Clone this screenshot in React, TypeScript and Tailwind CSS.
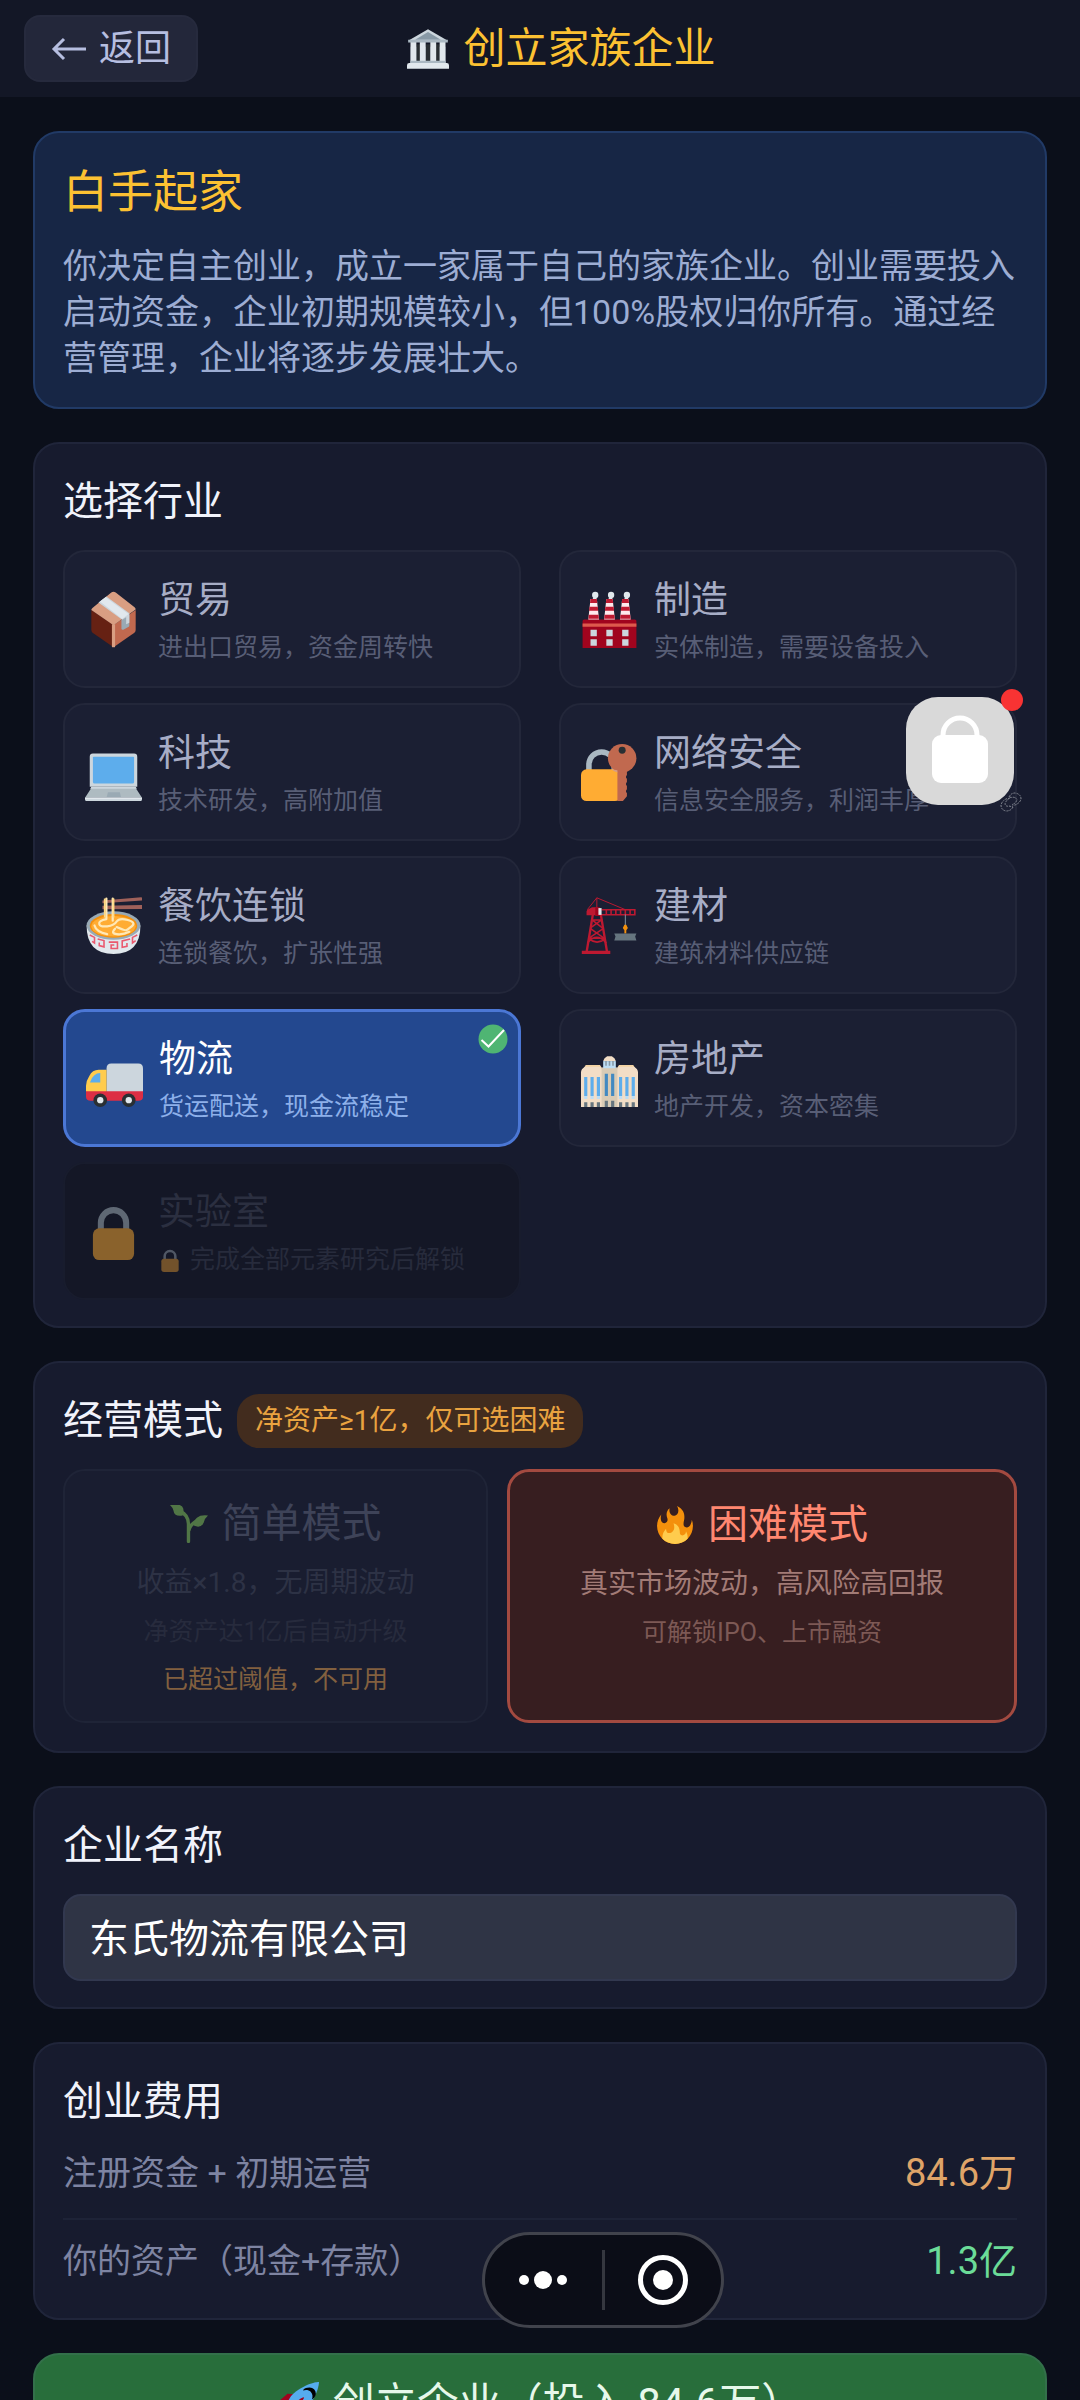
import { useState } from 'react'
import type { ReactNode } from 'react'
import clsx from 'clsx'

type IconProps = { className?: string }

const Emoji = ({ className, children }: IconProps & { children: ReactNode }) => (
    <svg viewBox="0 0 36 36" className={clsx('shrink-0', className)} aria-hidden="true">
        {children}
    </svg>
)

const BankIcon = ({ className }: IconProps) => (
    <Emoji className={className}>
        <path fill="#66757F" d="M3 16h30v18H3z" />
        <path fill="#292F33" d="M8 14h4v18H8zm8 0h4v18h-4zm8 0h4v18h-4z" />
        <path fill="#E1E8ED" d="M3 11h5v21H3zm8 0h5v21h-5zm9 0h5v21h-5zm8 0h5v21h-5z" />
        <path fill="#CCD6DD" d="M1 11L18 1l17 10z" />
        <path fill="#8899A6" d="M7 10l11-6.5L29 10z" />
        <path fill="#AAB8C2" d="M1 10h34v2.500H1zM3 28h30v2.500H3z" />
        <path fill="#E1E8ED" d="M2 30h32a2 2 0 0 1 2 2v3H0v-3a2 2 0 0 1 2-2z" />
    </Emoji>
)

const PackageIcon = ({ className }: IconProps) => (
    <Emoji className={className}>
        <path fill="#662113" d="M18 35.500L4.800 26.300Q4 25.700 4 24.700V12l14 9.500z" />
        <path fill="#C1694F" d="M18 35.500l13.200-9.200q.8-.6.8-1.600V12l-14 9.500z" />
        <path fill="#D99E82" d="M4 12q0-.8.700-1.300L16.600.9q1.400-1 2.800 0l11.900 9.300q.7.600.7 1.500L18 21.700z" />
        <path fill="#D99E82" d="M17 21h2v14.500h-2z" />
        <path fill="#99AAB5" d="M23 18.300l5-3.500v7q0 .5-.4.800l-3.400 1.800q-1.200.5-1.200-.8z" />
        <path fill="#CCD6DD" d="M8.500 7.300l5-3.800L28 14v6l-2 1v-4.500l-2.500 1.700z" />
        <path fill="#E1E8ED" d="M9.500 6.600l3.500-2.700L27.500 14.500l-4 3.200z" />
    </Emoji>
)

const FactoryIcon = ({ className }: IconProps) => (
    <Emoji className={className}>
        <g fill="#E1E8ED">
            <circle cx="9" cy="2.500" r="2" />
            <circle cx="19" cy="2.500" r="2" />
            <circle cx="29" cy="2.500" r="2" />
            <path d="M7 6l1.500-4 1.500 3zm10 0l1.500-4 1.500 3zm10 0l1.500-4 1.500 3z" />
        </g>
        <path fill="#FFE8EC" d="M6 5h4l1.500 14h-7zM16 5h4l1.500 14h-7zM26 5h4l1.500 14h-7z" />
        <path
            fill="#BE1931"
            d="M6 5h4l.3 2.500H5.700zM5.400 10h5.200l.3 2.500H5.100zM4.900 15h6.200l.2 2.500H4.700zM16 5h4l.3 2.500h-4.600zM15.400 10h5.200l.3 2.500h-5.800zM14.900 15h6.200l.2 2.500h-6.600zM26 5h4l.3 2.500h-4.600zM25.400 10h5.200l.3 2.500h-5.800zM24.900 15h6.200l.2 2.500h-6.600z"
        />
        <path fill="#A0041E" d="M2 18h32q1 0 1 1v17H1V19q0-1 1-1z" />
        <path fill="#DD5A4D" d="M1 20.500h34v2H1z" />
        <path fill="#CCD6DD" d="M6 24.500h4v4H6zm10 0h4v4h-4zm10 0h4v4h-4zM6 30.500h4v4H6zm10 0h4v4h-4zm10 0h4v4h-4z" />
    </Emoji>
)

const LaptopIcon = ({ className }: IconProps) => (
    <Emoji className={className}>
        <g transform="translate(0 2)">
            <path fill="#CCD6DD" d="M5 4h26q2 0 2 2v19H3V6q0-2 2-2z" />
            <path fill="#5DADEC" d="M5.500 6h25q.5 0 .5.500V22q0 1-1 1H6q-1 0-1-1V6.500q0-.5.500-.5z" />
            <path fill="#AEBBC1" d="M4.500 25h27l4.500 7H0z" />
            <path fill="#CCD6DD" d="M4 25h28l.8 1.300H3.200zM0 32.500h36V33q0 1-1 1H1q-1 0-1-1z" />
            <path fill="#E1E8ED" d="M0 31.800h36v1H0z" />
            <path fill="#9AAAB4" d="M14.500 28.500h7.500l.7 3h-9z" />
        </g>
    </Emoji>
)

const LockKeyIcon = ({ className }: IconProps) => (
    <Emoji className={className}>
        <path fill="none" stroke="#AAB8C2" strokeWidth="3.500" d="M5 19v-6a8 8 0 0 1 16 0v6" />
        <rect x="0" y="16" width="25" height="20" rx="3.500" fill="#FFAC33" />
        <path fill="#C1694F" d="M23 16h6v3.500q-1.200 1.200 0 2.500v2q-1.200 1.200 0 2.500v2q-1.200 1.200 0 2.500V33l-2.500 3H23z" />
        <circle cx="26" cy="9" r="9" fill="#C1694F" />
        <circle cx="26" cy="4" r="2.200" fill="#292F33" />
        <path fill="#D99E82" d="M19 16q2 1.500 4 2v-1.500z" />
    </Emoji>
)

const NoodlesIcon = ({ className }: IconProps) => (
    <Emoji className={className}>
        <path fill="#A0615A" d="M11 2.200L35.500.2q.5 0 .5.500v1.500L11 4zM11 5.500l25-.4v2.400l-25 .200z" />
        <path fill="#E1E8ED" d="M1 18q0 18 17 18t17-18z" />
        <path
            fill="none"
            stroke="#EA596E"
            strokeWidth="1"
            d="M3 24l3 1.500v3.500l-1.500-1M8 26.500l4 1v4l-3-.8v-2M15 28.500h5.500v4H16.500v-2.200h2M28.500 26.500l-5 1.200v4l3-.6v-2M33 24l-3 1.500v3.500l2-1.500"
        />
        <ellipse cx="18" cy="18" rx="17" ry="9" fill="#99AAB5" />
        <ellipse cx="18" cy="18.200" rx="15" ry="7.500" fill="#F4900C" />
        <ellipse cx="18" cy="18.500" rx="14" ry="6.500" fill="#FFAC33" />
        <path
            fill="none"
            stroke="#FFE8B6"
            strokeWidth="1.400"
            strokeLinecap="round"
            d="M13.500 1v13M17.500 1v14M13.500 14q-5 1-4.500 3t5 1.500 6-3 7-1 2.500 4-4 2.500-5.500-2M6 18q1 4 8 5.500M19 20q-3 3 1 3.500t8-1.500"
        />
        <path stroke="#FFD983" strokeWidth="1.200" d="M12.500 1v12M18 1v12" />
    </Emoji>
)

const CraneIcon = ({ className }: IconProps) => (
    <Emoji className={className}>
        <g fill="none" stroke="#BE1931">
            <path strokeWidth=".6" d="M4 8l6-7.500L28 8M10 .5V8" />
            <path strokeWidth="1" d="M13 8h21v3.200H13M16 8v3M19 8v3M22 8v3M25 8v3M28 8v3M31 8v3" />
            <path strokeWidth="1.500" d="M7.500 11L3.500 35M12.500 11l4 24" />
            <path strokeWidth="1" d="M7 14.500l6.500 5M13 14.500l-7 5M6 20l8.500 6M14 20l-9 6M5 26.500q5 4 10.500 0M4 29q6-7 12 0M6.500 14.500h7M5 26h10" />
        </g>
        <path fill="#BE1931" d="M4 8l3-1.500h4v5H3.500V9zM.5 34h18v2H.5z" />
        <path fill="#A0041E" d="M9 6.500h3V12H9z" />
        <path fill="#E1E8ED" d="M11 7h2v4.300h-2z" />
        <path stroke="#8899A6" strokeWidth=".6" d="M28 11v7.500" />
        <path fill="#F4900C" d="M27.400 17.500h1.200l1 2-1 1.500v2h-1.200v-2l-1-1.500z" />
        <path fill="#66757F" d="M21 23h14l-.8 2 .8 2.500H21l.8-2.500z" />
    </Emoji>
)

const TruckIcon = ({ className }: IconProps) => (
    <Emoji className={className}>
        <g transform="translate(0 2.500)">
            <path fill="#CCD6DD" d="M16 6h17q3 0 3 3v17H13V9q0-3 3-3z" />
            <path fill="#FFCC4D" d="M8 10h5v15H0v-5q0-3 2-6 2-4 6-4z" />
            <path fill="#5DADEC" d="M9 12v6H2.500q.8-3 2.800-4.600Q6.800 12 9 12z" />
            <path fill="#DD2E44" d="M0 23.500h36V27q0 2.500-3 2.500H3Q0 29.500 0 27z" />
            <g fill="#292F33">
                <circle cx="9" cy="29.200" r="4.300" />
                <circle cx="27" cy="29.200" r="4.300" />
            </g>
            <g fill="#E1E8ED">
                <circle cx="9" cy="29.200" r="2" />
                <circle cx="27" cy="29.200" r="2" />
            </g>
        </g>
    </Emoji>
)

const TowersIcon = ({ className }: IconProps) => (
    <Emoji className={className}>
        <g transform="translate(0 1)">
            <path fill="#F3D2A2" d="M3 8.500h9l1 1.500v3H2v-3zM24 8.500h9l1 1.500v3H23v-3z" />
            <path fill="#F2DDC6" d="M2.500 9.500h10L14 12v23H0V13q0-2 2.500-3.500zM23.500 9.500h10Q36 11 36 13v22H22V12z" />
            <path fill="#5DADEC" d="M2 16h2v12H2zm4 0h2v12H6zm4 0h2v12h-2zm14 0h2v12h-2zm4 0h2v12h-2zm4 0h2v12h-2z" />
            <path fill="#BDDDF4" d="M2 28h2v2H2zm4 0h2v2H6zm4 0h2v2h-2zm14 0h2v2h-2zm4 0h2v2h-2zm4 0h2v2h-2z" />
            <path fill="#66757F" d="M2 32h2v3H2zm4 0h2v3H6zm4 0h2v3h-2zm14 0h2v3h-2zm4 0h2v3h-2zm4 0h2v3h-2z" />
            <path fill="#D9CBB5" d="M13 10h10v25H13z" />
            <path fill="#BDDDF4" d="M14 6h8v4.500h-8z" />
            <path fill="#8899A6" d="M15.300 6h1v3h-1zm2.200 0h1v3h-1zm2.200 0h1v3h-1z" />
            <path fill="#F2DDC6" d="M14 6q.5-2 2.500-3h3q2 1 2.500 3z" />
            <path fill="#4289C1" d="M15 14h2v14h-2zm4 0h2v14h-2z" />
            <path fill="#66757F" d="M15 31h2v4h-2zm4 0h2v4h-2z" />
        </g>
    </Emoji>
)

const LockIcon = ({ className }: IconProps) => (
    <Emoji className={className}>
        <path fill="none" stroke="#AAB8C2" strokeWidth="3.800" d="M10 17v-4.500a8 8 0 0 1 16 0V17" />
        <rect x="5" y="16" width="26" height="20" rx="4" fill="#FFAC33" />
    </Emoji>
)

const SproutIcon = ({ className }: IconProps) => (
    <Emoji className={className}>
        <path fill="none" stroke="#77B255" strokeWidth="3.200" strokeLinecap="round" d="M17.500 34.500V18q0-9-9-12.500M18 24q1-6 8-9" />
        <path fill="#77B255" d="M0 0q9-1.500 11.500 1.500T12 10Q4 11.500 3.200 5 3 3 0 0zM36 10q-7-.8-10.500 2t-3 7.500q7 3 9.500-3 1-4 4-6.500z" />
    </Emoji>
)

const FireIcon = ({ className }: IconProps) => (
    <Emoji className={className}>
        <path
            fill="#F4900C"
            d="M35 19c0-2.062-.367-4.039-1.040-5.868-.46 5.389-3.333 8.157-6.335 6.868-2.812-1.208-.917-5.917-.777-8.164.236-3.809-.012-8.169-6.931-11.794 2.875 5.500.333 8.917-2.333 9.125-2.958.231-5.667-2.542-4.667-7.042-3.238 2.386-3.332 6.402-2.333 9 1.042 2.708-.042 4.958-2.583 5.208-2.840.280-4.418-3.041-2.963-8.333C2.520 10.965 1 14.805 1 19c0 9.389 7.611 17 17 17s17-7.611 17-17z"
        />
        <path
            fill="#FFCC4D"
            d="M28.394 23.999c.148 3.084-2.561 4.293-4.019 3.709-2.106-.843-1.541-2.291-2.083-5.291s-2.625-5.083-5.708-6c2.250 6.333-1.247 8.667-3.080 9.084-1.872.426-3.753-.001-3.968-4.007C7.352 23.668 6 26.676 6 30c0 .368.023.730.055 1.090C9.125 34.124 13.342 36 18 36s8.875-1.876 11.945-4.910c.032-.360.055-.722.055-1.090 0-2.187-.584-4.236-1.606-6.001z"
        />
    </Emoji>
)

const RocketIcon = ({ className }: IconProps) => (
    <Emoji className={className}>
        <path fill="#A0041E" d="M1 17l8-7 12 1 4 14 1 2-7 8-1-8L9 18z" />
        <path fill="#FFAC33" d="M.973 35s-.036-7.979 2.985-11S15 21.187 15 21.187 14.999 29 11.999 32c-3 3-11.026 3-11.026 3z" />
        <path fill="#55ACEE" d="M35.999 0s-10 0-22 10c-6 5-6 14-4 16s11 2 16-4c10-12 10-22 10-22z" />
        <path fill="#000" d="M26 5c-1.600 0-3 .9-3.700 2.300 2.300-1 5-.6 6.600 1 1.600 1.700 2 4.300 1 6.600A4 4 0 0 0 26 5z" />
        <path fill="#A0041E" d="M8 28s0-4 1-5 13-10.800 14-9.800-8.800 13-9.800 14S8 28 8 28z" />
    </Emoji>
)

type Industry = {
    id: string
    name: string
    desc: string
    Icon: (props: IconProps) => ReactNode
}

const industries: Industry[] = [
    { id: 'trade', name: '贸易', desc: '进出口贸易，资金周转快', Icon: PackageIcon },
    { id: 'factory', name: '制造', desc: '实体制造，需要设备投入', Icon: FactoryIcon },
    { id: 'tech', name: '科技', desc: '技术研发，高附加值', Icon: LaptopIcon },
    { id: 'security', name: '网络安全', desc: '信息安全服务，利润丰厚', Icon: LockKeyIcon },
    { id: 'food', name: '餐饮连锁', desc: '连锁餐饮，扩张性强', Icon: NoodlesIcon },
    { id: 'material', name: '建材', desc: '建筑材料供应链', Icon: CraneIcon },
    { id: 'logistics', name: '物流', desc: '货运配送，现金流稳定', Icon: TruckIcon },
    { id: 'estate', name: '房地产', desc: '地产开发，资本密集', Icon: TowersIcon },
]

const Panel = ({ className, children }: { className: string; children: ReactNode }) => (
    <section className={clsx('shrink-0 rounded-[26px] border-2 border-[#20253a] bg-[#171b2e] px-7 pt-7', className)}>
        {children}
    </section>
)

const titleClass = 'text-[40px] leading-[60px] text-[#f1f3fb]'

const IndustryCard = ({ item, selected, onSelect }: { item: Industry; selected: boolean; onSelect: () => void }) => (
    <button
        type="button"
        aria-pressed={selected}
        onClick={onSelect}
        className={clsx(
            'relative flex h-[138px] w-[48%] items-center gap-4 rounded-[22px] px-5 text-left',
            selected ? 'border-3 border-[#4b77d5] bg-[#23488f]' : 'border-2 border-[#23273a] bg-[#1b1f33]'
        )}
    >
        <item.Icon className="size-[57px]" />
        <span className="flex flex-col gap-[2px] pt-[6px]">
            <span className={clsx('text-[37px] leading-[50px]', selected ? 'text-white' : 'text-[#a7adc6]')}>{item.name}</span>
            <span className={clsx('text-[25px] leading-[40px]', selected ? 'text-[#8db0ea]' : 'text-[#585e76]')}>{item.desc}</span>
        </span>
        {selected && (
            <svg viewBox="0 0 30 30" className="absolute right-[10px] top-3 size-[30px]" aria-hidden="true">
                <circle cx="15" cy="15" r="14.500" fill="#4fb573" />
                <path d="M3.500 16l7 6.500L26 6" fill="none" stroke="#fff" strokeWidth="2" />
            </svg>
        )}
    </button>
)

const App = () => {
    const [industry, setIndustry] = useState('logistics')
    const [name, setName] = useState('东氏物流有限公司')

    return (
        <div className="relative flex h-screen flex-col overflow-hidden bg-[#0b0f1a] font-['Roboto','Noto_Sans_CJK_SC',sans-serif] text-white">
            <header className="grid shrink-0 grid-cols-[174px_1fr_131px] items-center bg-[#131726] px-6 py-[15px]">
                <button type="button" className="flex h-[67px] items-center justify-center gap-3 rounded-2xl border-2 border-[#262a3d] bg-[#23273a] text-[36px] text-[#b6bee0]">
                    <svg viewBox="0 0 36 36" className="size-9" fill="none" stroke="currentColor" strokeWidth="3" aria-hidden="true">
                        <path d="M35 18H3M13 8L3 18l10 10" />
                    </svg>
                    返回
                </button>
                <h1 className="flex items-center justify-center gap-[14px] text-[42px] leading-[60px] text-[#fcc132]">
                    <BankIcon className="size-[42px]" />
                    创立家族企业
                </h1>
            </header>

            <main className="flex flex-1 flex-col gap-[33px] overflow-y-auto px-[33px] py-[34px] [scrollbar-width:none]">
                <section className="shrink-0 rounded-[26px] border-2 border-[#213a66] bg-[#172645] px-7 pb-[26px] pt-7">
                    <h2 className="mb-[18px] text-[45px] leading-[64px] text-[#fcc132]">白手起家</h2>
                    <p className="text-[34px] leading-[46px] text-[#9dadd3]">
                        你决定自主创业，成立一家属于自己的家族企业。创业需要投入启动资金，企业初期规模较小，但100%股权归你所有。通过经营管理，企业将逐步发展壮大。
                    </p>
                </section>

                <Panel className="pb-[26px]">
                    <h2 className={clsx(titleClass, 'mb-[18px]')}>选择行业</h2>
                    <div className="flex flex-wrap justify-between gap-y-[15px]">
                        {industries.map((item) => (
                            <IndustryCard key={item.id} item={item} selected={industry === item.id} onSelect={() => setIndustry(item.id)} />
                        ))}
                        <button type="button" disabled className="flex h-[138px] w-[48%] items-center gap-4 rounded-[22px] border-2 border-[#181c2d] bg-[#141726] px-5 text-left">
                            <LockIcon className="size-[57px] opacity-50" />
                            <span className="flex flex-col gap-[2px] pt-[6px]">
                                <span className="text-[37px] leading-[50px] text-[#2b2f40]">实验室</span>
                                <span className="flex items-center gap-2 text-[25px] leading-[40px] text-[#272b3c]">
                                    <LockIcon className="size-6 opacity-40" />
                                    完成全部元素研究后解锁
                                </span>
                            </span>
                        </button>
                    </div>
                </Panel>

                <Panel className="pb-7">
                    <div className="mb-[18px] flex items-center gap-[14px]">
                        <h2 className={titleClass}>经营模式</h2>
                        <span className="rounded-[22px] bg-[#422c1e] px-[18px] text-[28px] leading-[54px] text-[#e9a340]">净资产≥1亿，仅可选困难</span>
                    </div>
                    <div className="grid grid-cols-[5fr_6fr] gap-[19px]">
                        <button type="button" disabled className="flex flex-col items-center gap-[10px] rounded-[22px] border-2 border-[#1f2437] bg-[#191d30] px-5 pb-[22px] pt-6">
                            <span className="flex items-center gap-[14px] text-[40px] leading-[58px] text-[#3e4358]">
                                <SproutIcon className="size-[38px] opacity-60" />
                                简单模式
                            </span>
                            <span className="text-[28px] leading-10 text-[#2d3245]">收益×1.8，无周期波动</span>
                            <span className="text-[25px] leading-[38px] text-[#272b3d]">净资产达1亿后自动升级</span>
                            <span className="text-[25px] leading-[38px] text-[#82603f]">已超过阈值，不可用</span>
                        </button>
                        <button type="button" aria-pressed="true" className="flex flex-col items-center gap-[10px] rounded-[22px] border-3 border-[#a34a40] bg-[#371e20] px-5 pb-[22px] pt-6">
                            <span className="flex items-center gap-[14px] text-[40px] leading-[58px] text-[#ff8770]">
                                <FireIcon className="size-[38px]" />
                                困难模式
                            </span>
                            <span className="text-[28px] leading-10 text-[#a27b76]">真实市场波动，高风险高回报</span>
                            <span className="text-[25px] leading-[38px] text-[#7d5955]">可解锁IPO、上市融资</span>
                        </button>
                    </div>
                </Panel>

                <Panel className="pb-[26px]">
                    <label htmlFor="company" className={clsx(titleClass, 'mb-[18px] block')}>
                        企业名称
                    </label>
                    <input
                        id="company"
                        type="text"
                        value={name}
                        onChange={(e) => setName(e.target.value)}
                        className="block h-[87px] w-full rounded-[18px] border-2 border-[#32384f] bg-[#2f3445] px-6 pb-1 text-[40px] text-white outline-none"
                    />
                </Panel>

                <Panel className="pb-3">
                    <h2 className={titleClass}>创业费用</h2>
                    <dl>
                        <div className="flex items-center justify-between border-b-2 border-[#1e2337] pb-[22px] pt-[18px] leading-[46px]">
                            <dt className="text-[34px] text-[#7e84a2]">注册资金 + 初期运营</dt>
                            <dd className="text-[38px] text-[#dfa468]">84.6万</dd>
                        </div>
                        <div className="flex items-center justify-between pb-[22px] pt-[18px] leading-[46px]">
                            <dt className="text-[34px] text-[#7e84a2]">你的资产（现金+存款）</dt>
                            <dd className="text-[38px] text-[#6bdc98]">1.3亿</dd>
                        </div>
                    </dl>
                </Panel>

                <button type="button" className="flex h-[100px] shrink-0 items-center justify-center gap-[14px] rounded-[26px] border-2 border-[#33704a] bg-[#286e3b] text-[42px] text-[#e6f8ea]">
                    <RocketIcon className="size-[42px]" />
                    创立企业（投入 84.6万）
                </button>
            </main>

            {/* floating shortcut */}
            <button type="button" aria-label="lock" className="absolute right-[66px] top-[697px] flex size-[108px] items-center justify-center rounded-[32px] bg-[#d9d9d9]">
                <svg viewBox="0 0 108 108" className="size-[108px]" aria-hidden="true">
                    <path d="M37 42v-4a17 17 0 0 1 34 0v4" fill="none" stroke="#fff" strokeWidth="5" />
                    <rect x="26" y="38" width="56" height="48" rx="9" fill="#fff" />
                </svg>
                <span className="absolute -right-[9px] -top-2 size-[22px] rounded-full bg-[#f83333]" />
                <svg viewBox="0 0 22 20" className="absolute -bottom-2 -right-2 size-[22px]" fill="none" stroke="#858993" strokeWidth="1" strokeDasharray="2 1" aria-hidden="true">
                    <path d="M9 5q2-4 6-4 6 1 6 6-1 4-6 6-2 .5-3-.5 4-1 5-5-2-3-5-2zM13 15q-2 4-7 4-5-1-5-6 1-4 5-6l4-1q-4 2-5 6 1 3 4 2z" />
                </svg>
            </button>

            {/* mini program capsule */}
            <div className="absolute bottom-[72px] left-[482px] flex h-24 w-[242px] items-center rounded-full border-3 border-[#41434c] bg-[#0b0d17]">
                <button type="button" aria-label="more" className="flex flex-1 items-center justify-center gap-[5px]">
                    <span className="size-[10px] rounded-full bg-white" />
                    <span className="size-[18px] rounded-full bg-white" />
                    <span className="size-[10px] rounded-full bg-white" />
                </button>
                <span className="h-[60px] w-[3px] bg-[#35373f]" />
                <button type="button" aria-label="close" className="flex flex-1 items-center justify-center">
                    <span className="flex size-[50px] items-center justify-center rounded-full border-5 border-white">
                        <span className="size-5 rounded-full bg-white" />
                    </span>
                </button>
            </div>
        </div>
    )
}

export default App
